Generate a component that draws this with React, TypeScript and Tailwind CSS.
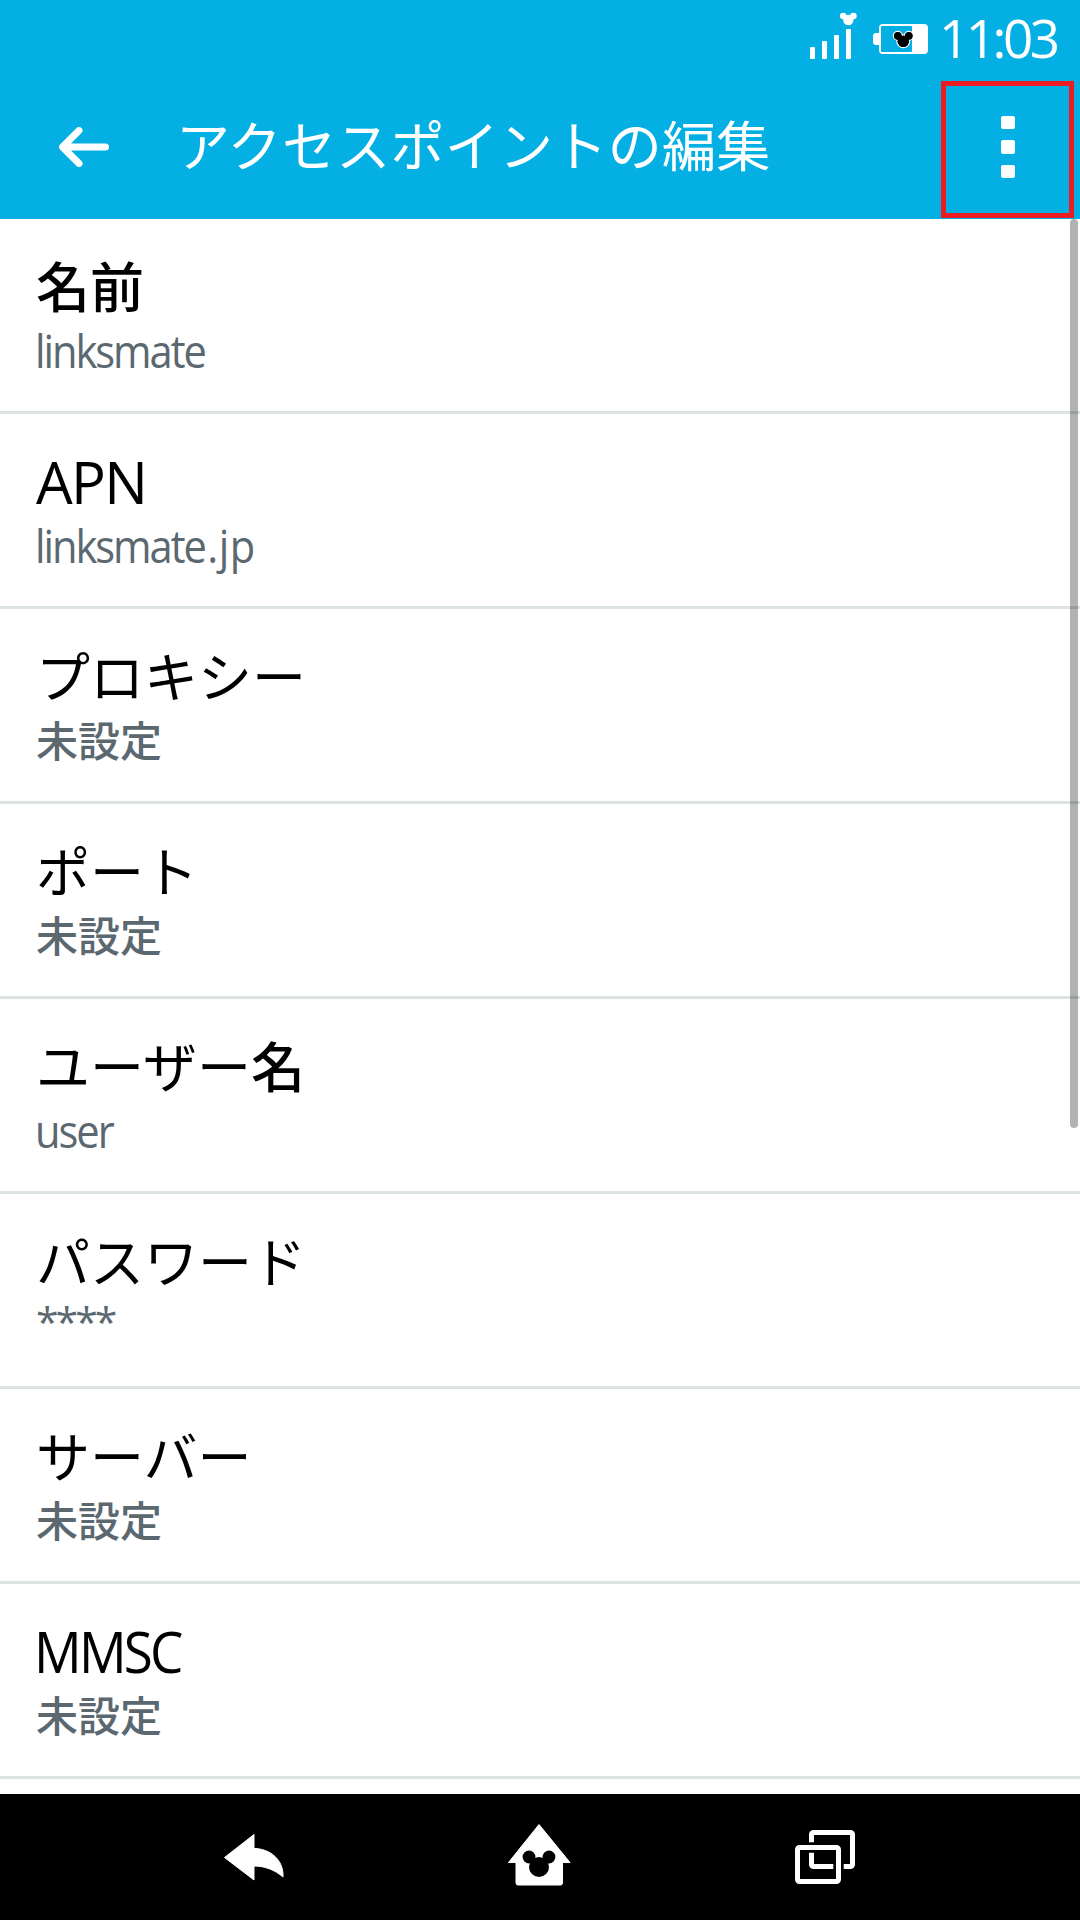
import React from "react";

interface Setting {
  label: React.ReactNode;
  value: React.ReactNode;
  labelClass?: string;
  valueClass?: string;
}

const KANA_LABEL = "text-[54px] leading-[68px]";
const KANJI_VALUE = "text-[42px] font-medium leading-[52px]";
// Latin text is set slightly condensed
const LATIN_VALUE =
  "origin-left scale-x-[0.925] font-['Open_Sans'] text-[45px] font-medium leading-[56px] tracking-[-2.2px] -ml-px";

const settings: Setting[] = [
  {
    label: <span className="font-medium">名前</span>,
    value: "linksmate",
    valueClass: LATIN_VALUE,
  },
  {
    label: "APN",
    value: (
      <>
        linksmat<span className="tracking-[0.5px]">e.</span>
        <span className="tracking-[0.5px]">jp</span>
      </>
    ),
    labelClass:
      "font-['Open_Sans'] text-[58px] leading-[71px] tracking-[-1.6px]",
    valueClass: LATIN_VALUE,
  },
  { label: "プロキシー", value: "未設定" },
  { label: "ポート", value: "未設定" },
  {
    label: (
      <>
        ユーザー<span className="font-medium">名</span>
      </>
    ),
    value: "user",
    valueClass: LATIN_VALUE,
  },
  {
    label: "パスワード",
    value: "****",
    valueClass:
      "font-['Open_Sans'] text-[41px] leading-[46px] tracking-[-3px]",
  },
  { label: "サーバー", value: "未設定" },
  {
    label: "MMSC",
    value: "未設定",
    labelClass:
      "origin-left scale-x-[0.93] font-['Open_Sans'] text-[57px] leading-[71px] tracking-[-3px] -ml-0.5",
  },
];

function SignalIcon() {
  return (
    <svg className="h-12 w-12" viewBox="0 0 48 48" fill="#fff">
      <rect x="0" y="35" width="5" height="12" rx="1" />
      <rect x="12" y="29" width="5" height="18" rx="1" />
      <rect x="24" y="23" width="5" height="24" rx="1" />
      <rect x="36" y="17" width="5" height="30" rx="1" />
      <circle cx="38.3" cy="8" r="5.2" />
      <circle cx="33.2" cy="4" r="3.3" />
      <circle cx="43.4" cy="4" r="3.3" />
    </svg>
  );
}

function BatteryIcon() {
  return (
    <svg className="h-[30px] w-[55px]" viewBox="0 0 55 30">
      <rect x="0" y="9" width="10" height="12" rx="3" fill="#fff" />
      <rect x="6" y="0" width="49" height="30" rx="4" fill="#fff" />
      <rect x="8" y="2" width="31" height="26" rx="1" fill="#04afe3" />
      <g stroke="#fff" strokeWidth="1.4">
        <circle cx="30.3" cy="17.3" r="6.3" />
        <circle cx="24.8" cy="11.8" r="4.3" />
        <circle cx="35.8" cy="11.8" r="4.3" />
      </g>
      <circle cx="30.3" cy="17.3" r="5.8" />
      <circle cx="24.8" cy="11.8" r="3.9" />
      <circle cx="35.8" cy="11.8" r="3.9" />
    </svg>
  );
}

function StatusBar() {
  return (
    <div className="flex h-[77px] items-start pl-[810px] text-white">
      <div className="pt-3">
        <SignalIcon />
      </div>
      <div className="ml-[15px] pt-6">
        <BatteryIcon />
      </div>
      <span className="ml-[11px] font-['Open_Sans'] text-[53px] leading-[75px] tracking-[-3.5px]">
        11:03
      </span>
    </div>
  );
}

function ActionBar() {
  return (
    <div className="flex h-[142px] items-start text-white">
      <svg
        className="mt-[50px] ml-[59px] h-10 w-[50px] shrink-0"
        viewBox="0 0 50 40"
        fill="none"
        stroke="#fff"
        strokeWidth="7"
        strokeLinecap="round"
        strokeLinejoin="round"
      >
        <path d="M46.5 20H5M20 3.5L3.5 20L20 36.5" />
      </svg>
      <h1 className="ml-[67px] w-[765px] text-[54px] leading-[134px] tracking-[0.3px] whitespace-nowrap">
        アクセスポイントの編集
      </h1>
      <button className="mt-1 flex h-[137px] w-[133px] shrink-0 flex-col items-center gap-[11px] border-[5px] border-[#ed1c24] pt-[29.5px]">
        <span className="h-[13.5px] w-3.5 rounded-[2px] bg-white" />
        <span className="h-[13.5px] w-3.5 rounded-[2px] bg-white" />
        <span className="h-[13.5px] w-3.5 rounded-[2px] bg-[#fafafa]" />
      </button>
    </div>
  );
}

function SettingRow({
  label,
  value,
  labelClass = KANA_LABEL,
  valueClass = KANJI_VALUE,
}: Setting) {
  return (
    <li className="h-[195px] border-b-[3px] border-[#dde2e2] pt-8 pl-9">
      <div className={`h-[72px] text-black ${labelClass}`}>{label}</div>
      <div className={`h-14 text-[#5b6870] ${valueClass}`}>{value}</div>
    </li>
  );
}

function NavigationBar() {
  return (
    <nav className="flex h-[126px] items-start bg-black">
      <svg className="mt-[39px] ml-[223px] h-12 w-[61px]" viewBox="0 0 61 48" fill="#fff">
        <path
          d="M1.5 24.5L31 1.5V15.5C47 15.5 61 27 60 44C52 37 42 33 31 33V47Z"
          stroke="#fff"
          strokeLinejoin="round"
        />
      </svg>
      <svg className="mt-7 ml-[223px] h-16 w-16" viewBox="0 0 64 64">
        <path
          d="M32 2.5L63 40.5H55.5V61Q55.5 63 53.5 63H11Q9 63 9 61V40.5H1.5Z"
          fill="#fff"
          stroke="#fff"
          strokeLinejoin="round"
        />
        <circle cx="32" cy="45" r="10" />
        <circle cx="22" cy="35" r="6.4" />
        <circle cx="42" cy="35" r="6.4" />
      </svg>
      <svg className="mt-9 ml-56 h-[54px] w-[60px]" viewBox="0 0 60 54" fill="none">
        <rect x="16.5" y="2.5" width="41" height="34" rx="2" stroke="#fff" strokeWidth="5" />
        <rect x="2.5" y="17.5" width="41" height="34" rx="2" stroke="#000" strokeWidth="10.4" />
        <rect x="2.5" y="17.5" width="41" height="34" rx="2" stroke="#fff" strokeWidth="5" />
      </svg>
    </nav>
  );
}

export default function App() {
  return (
    <div className="flex h-[1920px] w-[1080px] flex-col overflow-hidden bg-white font-['Noto_Sans_CJK_JP',sans-serif]">
      <header className="h-[219px] shrink-0 bg-[#04afe3]">
        <StatusBar />
        <ActionBar />
      </header>
      <main className="relative h-[1575px] shrink-0 overflow-hidden">
        <ul>
          {settings.map((setting, index) => (
            <SettingRow key={index} {...setting} />
          ))}
        </ul>
        {/* scroll thumb */}
        <div className="absolute top-0 right-0.5 h-[909px] w-2 rounded-full bg-black/30" />
      </main>
      <NavigationBar />
    </div>
  );
}
